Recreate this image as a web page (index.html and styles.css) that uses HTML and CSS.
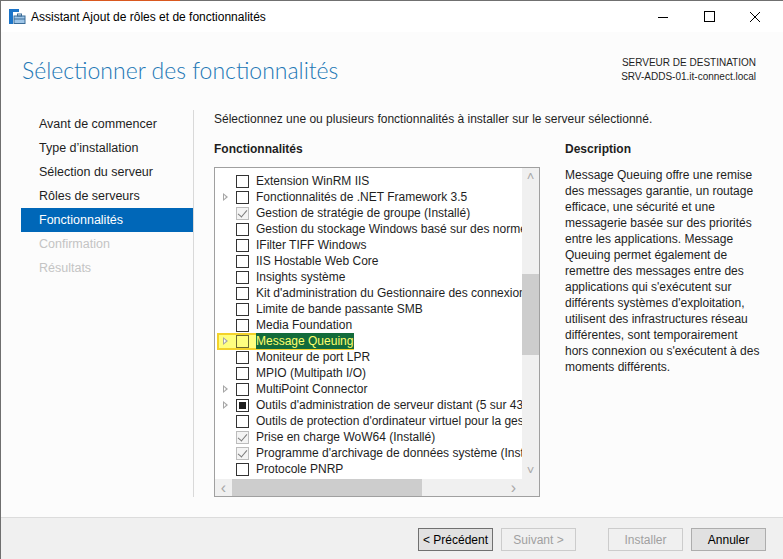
FILE: index.html
```html
<!DOCTYPE html>
<html lang="fr">
<head>
    <meta charset="UTF-8">
    <title>Assistant Ajout de rôles et de fonctionnalités</title>
    <link rel="stylesheet" href="styles.css">
</head>
<body>
    <div class="window">
        <div class="topline">
            <span class="tl-gray"></span>
            <span class="tl-orange"></span>
            <span class="tl-rest"></span>
        </div>

        <div class="titlebar">
            <svg class="app-icon" width="17" height="15" viewBox="0 0 17 15">
                <rect x="0" y="0" width="4" height="15" fill="#1b74c8"/>
                <rect x="0" y="0" width="10" height="3" fill="#1b74c8"/>
                <rect x="5" y="7" width="11" height="7.5" fill="#9fc6e8" stroke="#3a6c98" stroke-width="1"/>
                <rect x="8.5" y="5" width="4" height="2" fill="none" stroke="#3a6c98" stroke-width="1"/>
                <line x1="5" y1="10" x2="16" y2="10" stroke="#3a6c98" stroke-width="1"/>
            </svg>
            <span class="title">Assistant Ajout de rôles et de fonctionnalités</span>
            <div class="controls">
                <svg width="46" height="31" viewBox="0 0 46 31"><line x1="18" y1="16.5" x2="28" y2="16.5" stroke="#000" stroke-width="1"/></svg>
                <svg width="46" height="31" viewBox="0 0 46 31"><rect x="18.5" y="10.5" width="10" height="10" fill="none" stroke="#000" stroke-width="1"/></svg>
                <svg width="46" height="31" viewBox="0 0 46 31"><path d="M18 11 L28 21 M28 11 L18 21" stroke="#000" stroke-width="1"/></svg>
            </div>
        </div>

        <div class="header">
            <h1>Sélectionner des fonctionnalités</h1>
            <div class="dest">
                <div>SERVEUR DE DESTINATION</div>
                <div>SRV-ADDS-01.it-connect.local</div>
            </div>
        </div>

        <div class="body">
            <ul class="nav">
                <li>Avant de commencer</li>
                <li>Type d’installation</li>
                <li>Sélection du serveur</li>
                <li>Rôles de serveurs</li>
                <li class="active">Fonctionnalités</li>
                <li class="disabled">Confirmation</li>
                <li class="disabled">Résultats</li>
            </ul>

            <div class="main">
                <p class="intro">Sélectionnez une ou plusieurs fonctionnalités à installer sur le serveur sélectionné.</p>
                <div class="columns">
                    <div class="col-list">
                        <div class="col-title">Fonctionnalités</div>
                        <div class="listbox">
                            <div class="rows">
                                <div class="row"><span class="exp"></span><span class="cb"></span><span class="label">Extension WinRM IIS</span></div>
                                <div class="row"><span class="exp tri"></span><span class="cb"></span><span class="label">Fonctionnalités de .NET Framework 3.5</span></div>
                                <div class="row"><span class="exp"></span><span class="cb checked"></span><span class="label">Gestion de stratégie de groupe (Installé)</span></div>
                                <div class="row"><span class="exp"></span><span class="cb"></span><span class="label">Gestion du stockage Windows basé sur des normes</span></div>
                                <div class="row"><span class="exp"></span><span class="cb"></span><span class="label">IFilter TIFF Windows</span></div>
                                <div class="row"><span class="exp"></span><span class="cb"></span><span class="label">IIS Hostable Web Core</span></div>
                                <div class="row"><span class="exp"></span><span class="cb"></span><span class="label">Insights système</span></div>
                                <div class="row"><span class="exp"></span><span class="cb"></span><span class="label">Kit d'administration du Gestionnaire des connexions Bureau à distance</span></div>
                                <div class="row"><span class="exp"></span><span class="cb"></span><span class="label">Limite de bande passante SMB</span></div>
                                <div class="row"><span class="exp"></span><span class="cb"></span><span class="label">Media Foundation</span></div>
                                <div class="row highlighted"><span class="mark"></span><span class="exp tri"></span><span class="cb"></span><span class="label selected">Message Queuing</span></div>
                                <div class="row"><span class="exp"></span><span class="cb"></span><span class="label">Moniteur de port LPR</span></div>
                                <div class="row"><span class="exp"></span><span class="cb"></span><span class="label">MPIO (Multipath I/O)</span></div>
                                <div class="row"><span class="exp tri"></span><span class="cb"></span><span class="label">MultiPoint Connector</span></div>
                                <div class="row"><span class="exp tri"></span><span class="cb partial"></span><span class="label">Outils d'administration de serveur distant (5 sur 43 installé(s))</span></div>
                                <div class="row"><span class="exp"></span><span class="cb"></span><span class="label">Outils de protection d'ordinateur virtuel pour la gestion de Hyper-V</span></div>
                                <div class="row"><span class="exp"></span><span class="cb checked"></span><span class="label">Prise en charge WoW64 (Installé)</span></div>
                                <div class="row"><span class="exp"></span><span class="cb checked"></span><span class="label">Programme d'archivage de données système (Installé)</span></div>
                                <div class="row"><span class="exp"></span><span class="cb"></span><span class="label">Protocole PNRP</span></div>
                                <div class="row"><span class="exp"></span><span class="cb"></span><span class="label">Protocole SNMP</span></div>
                            </div>
                            <div class="vscroll">
                                <span class="arrow">&#x2C4;</span>
                                <div class="vtrack"><div class="vthumb"></div></div>
                                <span class="arrow">&#x2C5;</span>
                            </div>
                            <div class="hscroll">
                                <span class="arrow">&lsaquo;</span>
                                <div class="htrack"><div class="hthumb"></div></div>
                                <span class="arrow">&rsaquo;</span>
                            </div>
                            <div class="corner"></div>
                        </div>
                    </div>

                    <div class="col-desc">
                        <div class="col-title">Description</div>
                        <p class="desc">Message Queuing offre une remise<br>
                        des messages garantie, un routage<br>
                        efficace, une sécurité et une<br>
                        messagerie basée sur des priorités<br>
                        entre les applications. Message<br>
                        Queuing permet également de<br>
                        remettre des messages entre des<br>
                        applications qui s'exécutent sur<br>
                        différents systèmes d'exploitation,<br>
                        utilisent des infrastructures réseau<br>
                        différentes, sont temporairement<br>
                        hors connexion ou s'exécutent à des<br>
                        moments différents.</p>
                    </div>
                </div>
            </div>
        </div>

        <div class="footer">
            <button class="btn default">&lt; Précédent</button>
            <button class="btn" disabled>Suivant &gt;</button>
            <button class="btn install" disabled>Installer</button>
            <button class="btn">Annuler</button>
        </div>
    </div>
</body>
</html>
```

FILE: styles.css
```css
* {
    box-sizing: border-box;
}

body {
    margin: 0;
    width: 783px;
    height: 559px;
    overflow: hidden;
    font-family: "Liberation Sans", Arial, sans-serif;
    font-size: 12px;
    color: #1e1e1e;
    background: #fcfcfc;
}

.window {
    height: 559px;
    border-left: 1px solid #6f6f6f;
    display: flex;
    flex-direction: column;
}

.topline {
    display: flex;
    height: 1px;
    background: #707070;
}

.tl-gray {
    width: 81px;
}

.tl-orange {
    width: 98px;
    background: #d9581f;
}

.titlebar {
    height: 31px;
    background: #fff;
    display: flex;
    align-items: center;
}

.app-icon {
    margin-left: 8px;
    margin-right: 5px;
}

.title {
    flex: 1;
    font-size: 12px;
    color: #000;
}

.controls {
    display: flex;
    margin-right: 5px;
}

.controls svg {
    display: block;
}

.header {
    height: 78px;
    display: flex;
    justify-content: space-between;
    padding: 0 27px 0 21px;
}

h1 {
    margin: 22px 0 0;
    font-family: Lato, "Liberation Sans", sans-serif;
    font-weight: 300;
    font-size: 23px;
    line-height: 32px;
    color: #2277b5;
}

.dest {
    margin-top: 24px;
    text-align: right;
    font-size: 10px;
    line-height: 14px;
    color: #1e1e1e;
}

.body {
    height: 387px;
    display: flex;
}

.nav {
    list-style: none;
    margin: 0;
    padding: 2px 0 0 20px;
    width: 193px;
    border-right: 1px solid #d9d9d9;
}

.nav li {
    height: 24px;
    line-height: 24px;
    padding-left: 18px;
    font-size: 12.5px;
    color: #1e1e1e;
}

.nav li.active {
    background: #0067b8;
    color: #fff;
}

.nav li.disabled {
    color: #c4c4c4;
}

.main {
    padding-left: 20px;
    flex: 1;
}

.intro {
    margin: 0;
    padding-top: 1px;
    line-height: 16px;
}

.columns {
    display: flex;
    margin-top: 14px;
}

.col-title {
    font-weight: bold;
    line-height: 16px;
    height: 16px;
    margin-bottom: 10px;
}

.col-list {
    width: 326px;
}

.listbox {
    height: 330px;
    border: 1px solid #a0a0a0;
    background: #fff;
    display: grid;
    grid-template-columns: 307px 17px;
    grid-template-rows: 311px 17px;
    overflow: hidden;
}

.rows {
    padding-top: 5px;
    overflow: hidden;
}

.row {
    position: relative;
    height: 16px;
    display: flex;
    align-items: center;
    white-space: nowrap;
}

.exp {
    width: 21px;
    height: 16px;
    flex: none;
    position: relative;
}

.exp.tri::before {
    content: "";
    position: absolute;
    left: 8px;
    top: 4px;
    border-left: 5px solid #a6a6a6;
    border-top: 4px solid transparent;
    border-bottom: 4px solid transparent;
}

.exp.tri::after {
    content: "";
    position: absolute;
    left: 9px;
    top: 6px;
    border-left: 2px solid #fff;
    border-top: 2px solid transparent;
    border-bottom: 2px solid transparent;
}

.cb {
    width: 13px;
    height: 13px;
    flex: none;
    border: 1px solid #333;
    background: #fff;
    margin-right: 7px;
    position: relative;
}

.cb.checked {
    border-color: #bcbcbc;
    background: #f4f4f4;
}

.cb.checked::after {
    content: "";
    position: absolute;
    left: 3px;
    top: 0;
    width: 4px;
    height: 8px;
    border-right: 1.5px solid #7a7a7a;
    border-bottom: 1.5px solid #7a7a7a;
    transform: rotate(40deg);
}

.cb.partial::after {
    content: "";
    position: absolute;
    left: 2px;
    top: 2px;
    width: 7px;
    height: 7px;
    background: #1e1e1e;
}

.label {
    line-height: 16px;
}

.row.highlighted .cb {
    background: #ffff80;
    border-color: #6a6a30;
}

.mark {
    position: absolute;
    left: 2px;
    top: 0;
    width: 137px;
    height: 17px;
    border: 2px solid #f3d22a;
    background: rgba(255, 255, 0, 0.5);
}

.label.selected {
    position: relative;
    background: #136b3b;
    color: #ffff6e;
    padding-right: 1px;
}

.vscroll {
    background: #f0f0f0;
    display: flex;
    flex-direction: column;
    align-items: center;
}

.vscroll .arrow {
    height: 17px;
    line-height: 17px;
    color: #a8a8a8;
    font-size: 13px;
}

.vtrack {
    flex: 1;
    width: 100%;
    padding-top: 89px;
}

.vthumb {
    width: 100%;
    height: 81px;
    background: #cdcdcd;
}

.hscroll {
    background: #f0f0f0;
    display: flex;
    align-items: center;
}

.hscroll .arrow {
    width: 17px;
    text-align: center;
    color: #a8a8a8;
    font-size: 16px;
    line-height: 17px;
}

.htrack {
    flex: 1;
    height: 100%;
}

.hthumb {
    width: 190px;
    height: 100%;
    background: #cdcdcd;
}

.corner {
    background: #f0f0f0;
}

.col-desc {
    margin-left: 25px;
}

.desc {
    margin: 0;
    line-height: 16px;
    white-space: nowrap;
}

.footer {
    margin-top: 20px;
    flex: 1;
    border-top: 1px solid #dcdcdc;
    background: #f0f0f0;
    display: flex;
    padding: 10px 17px 0 0;
    justify-content: flex-end;
    align-items: flex-start;
}

.btn {
    width: 75px;
    height: 23px;
    font-family: "Liberation Sans", Arial, sans-serif;
    font-size: 12px;
    color: #000;
    background: #e1e1e1;
    border: 1px solid #adadad;
    padding: 0;
    margin-left: 8px;
}

.btn.default {
    border-color: #707070;
}

.btn:disabled {
    background: #f0f0f0;
    border-color: #cccccc;
    color: #a0a0a0;
}

.btn.install {
    margin-left: 32px;
}
```
